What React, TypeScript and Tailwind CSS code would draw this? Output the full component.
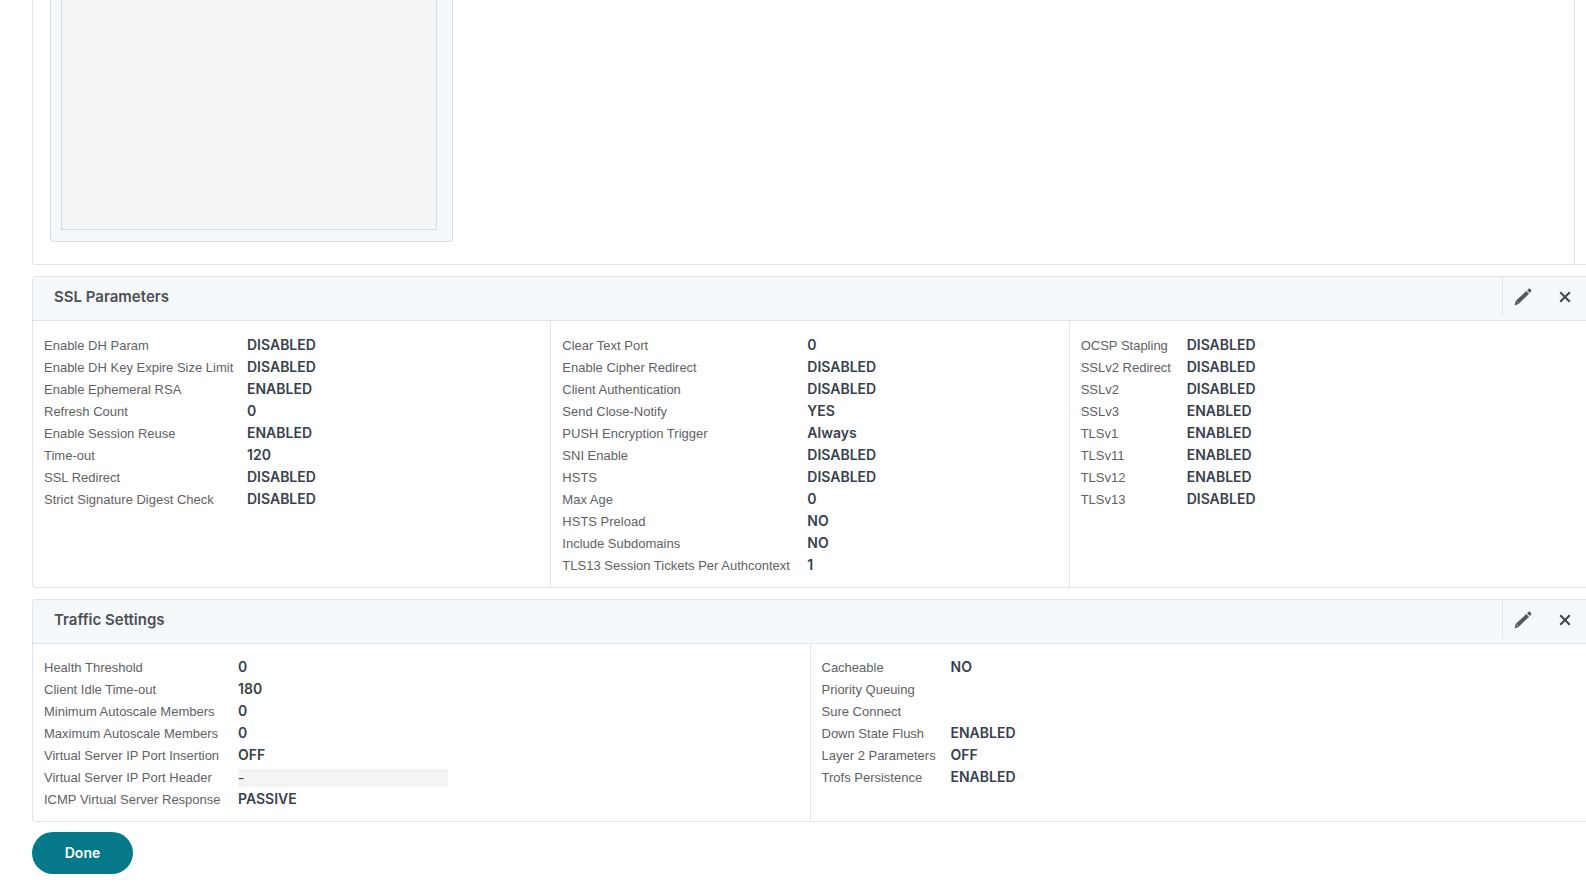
type Item = { label: string; value: string; field?: boolean };

type Column = { cols: string; items: Item[] };

const item = (label: string, value: string): Item => ({ label, value });

const sslColumns: Column[] = [
  {
    cols: "grid-cols-[203px_1fr]",
    items: [
      item("Enable DH Param", "DISABLED"),
      item("Enable DH Key Expire Size Limit", "DISABLED"),
      item("Enable Ephemeral RSA", "ENABLED"),
      item("Refresh Count", "0"),
      item("Enable Session Reuse", "ENABLED"),
      item("Time-out", "120"),
      item("SSL Redirect", "DISABLED"),
      item("Strict Signature Digest Check", "DISABLED"),
    ],
  },
  {
    cols: "grid-cols-[245px_1fr]",
    items: [
      item("Clear Text Port", "0"),
      item("Enable Cipher Redirect", "DISABLED"),
      item("Client Authentication", "DISABLED"),
      item("Send Close-Notify", "YES"),
      item("PUSH Encryption Trigger", "Always"),
      item("SNI Enable", "DISABLED"),
      item("HSTS", "DISABLED"),
      item("Max Age", "0"),
      item("HSTS Preload", "NO"),
      item("Include Subdomains", "NO"),
      item("TLS13 Session Tickets Per Authcontext", "1"),
    ],
  },
  {
    cols: "grid-cols-[106px_1fr]",
    items: [
      item("OCSP Stapling", "DISABLED"),
      item("SSLv2 Redirect", "DISABLED"),
      item("SSLv2", "DISABLED"),
      item("SSLv3", "ENABLED"),
      item("TLSv1", "ENABLED"),
      item("TLSv11", "ENABLED"),
      item("TLSv12", "ENABLED"),
      item("TLSv13", "DISABLED"),
    ],
  },
];

const trafficColumns: Column[] = [
  {
    cols: "grid-cols-[194px_1fr]",
    items: [
      item("Health Threshold", "0"),
      item("Client Idle Time-out", "180"),
      item("Minimum Autoscale Members", "0"),
      item("Maximum Autoscale Members", "0"),
      item("Virtual Server IP Port Insertion", "OFF"),
      { label: "Virtual Server IP Port Header", value: "-", field: true },
      item("ICMP Virtual Server Response", "PASSIVE"),
    ],
  },
  {
    cols: "grid-cols-[129px_1fr]",
    items: [
      item("Cacheable", "NO"),
      item("Priority Queuing", ""),
      item("Sure Connect", ""),
      item("Down State Flush", "ENABLED"),
      item("Layer 2 Parameters", "OFF"),
      item("Trofs Persistence", "ENABLED"),
    ],
  },
];

export default function App() {
  return (
    <main className="min-h-screen overflow-hidden bg-white pl-8 font-['Inter','Liberation_Sans',sans-serif]">
      <section className="rounded-bl border-b border-l border-[#e1e4e8]">
        <div className="mr-[11px] border-r border-[#e1e4e8] pb-[22px] pl-[17px]">
          <div className="h-[242px] w-[403px] rounded-b border border-t-0 border-[#d8dbdf] bg-[#f5f9fc] pr-[15px] pb-[11px] pl-[10px]">
            <div className="h-full border border-t-0 border-[#d8dbdf] bg-[#f3f4f6]" />
          </div>
        </div>
      </section>

      <Panel title="SSL Parameters" columns={sslColumns} grid="grid-cols-3" padding="pt-[13px] pb-[11px]" />
      <Panel title="Traffic Settings" columns={trafficColumns} grid="grid-cols-2" padding="pt-3 pb-[11px]" />

      <button
        type="button"
        className="mt-[10px] h-[42px] w-[101px] rounded-full bg-[#05788a] text-sm font-semibold text-white"
      >
        Done
      </button>
    </main>
  );
}

type PanelProps = { title: string; columns: Column[]; grid: string; padding: string };

// panels run slightly past the right edge of the page
function Panel({ title, columns, grid, padding }: PanelProps) {
  return (
    <section className="mt-[11px] -mr-0.5 overflow-hidden rounded-l border-y border-l border-[#e1e4e8]">
      <header className="flex h-11 items-start justify-between border-b border-[#e1e4e8] bg-[#f5f9fc]">
        <h2 className="pl-[21px] text-[15px] leading-10 font-semibold text-[#4d4f53]">{title}</h2>
        <div className="flex h-[39px] items-center border-l border-[#e1e4e8] pr-[17px] pl-[11px]">
          <button type="button" aria-label={`Edit ${title}`} className="mr-[27px]">
            <PencilIcon />
          </button>
          <button type="button" aria-label={`Close ${title}`}>
            <CloseIcon />
          </button>
        </div>
      </header>
      <div className={`grid ${grid}`}>
        {columns.map((column) => (
          <dl
            key={column.items[0].label}
            className={`border-r border-[#e1e4e8] pl-[11px] last:border-r-0 ${padding}`}
          >
            {column.items.map((it) => (
              <Row key={it.label} cols={column.cols} {...it} />
            ))}
          </dl>
        ))}
      </div>
    </section>
  );
}

function Row({ cols, label, value, field }: Item & { cols: string }) {
  return (
    <div className={`grid h-[22px] ${cols}`}>
      <dt className="font-['Liberation_Sans',Arial,sans-serif] text-[13px] leading-6 whitespace-nowrap text-[#5f6165]">
        {field ? <label htmlFor="port-header">{label}</label> : label}
      </dt>
      <dd className="text-sm leading-[22px] font-semibold text-[#383f4e]">
        {field ? (
          <input
            id="port-header"
            readOnly
            defaultValue={value}
            className="mt-[3px] block h-[18px] w-[210px] bg-[#f3f4f6] font-normal outline-none"
          />
        ) : (
          value
        )}
      </dd>
    </div>
  );
}

function PencilIcon() {
  return (
    <svg width="18" height="18" viewBox="0 0 18 18" fill="#58595b" className="block">
      <path d="M.6 17.4l1-4.3L12.3 2.9l2.8 2.8L4.5 16.1z" />
      <path d="M13.1 2.2l1.4-1.3c.5-.4 1.1-.4 1.6 0l1 1c.5.5.5 1.1 0 1.6l-1.3 1.4z" />
      <path d="M2.3 13.3l2.1 2.1" stroke="#c5c9cc" strokeWidth="0.6" />
    </svg>
  );
}

function CloseIcon() {
  return (
    <svg width="12" height="12" viewBox="0 0 12 12" fill="none" stroke="#434447" strokeWidth="2" className="block">
      <path d="M1.2 1.2l9.6 9.6M10.8 1.2l-9.6 9.6" />
    </svg>
  );
}
